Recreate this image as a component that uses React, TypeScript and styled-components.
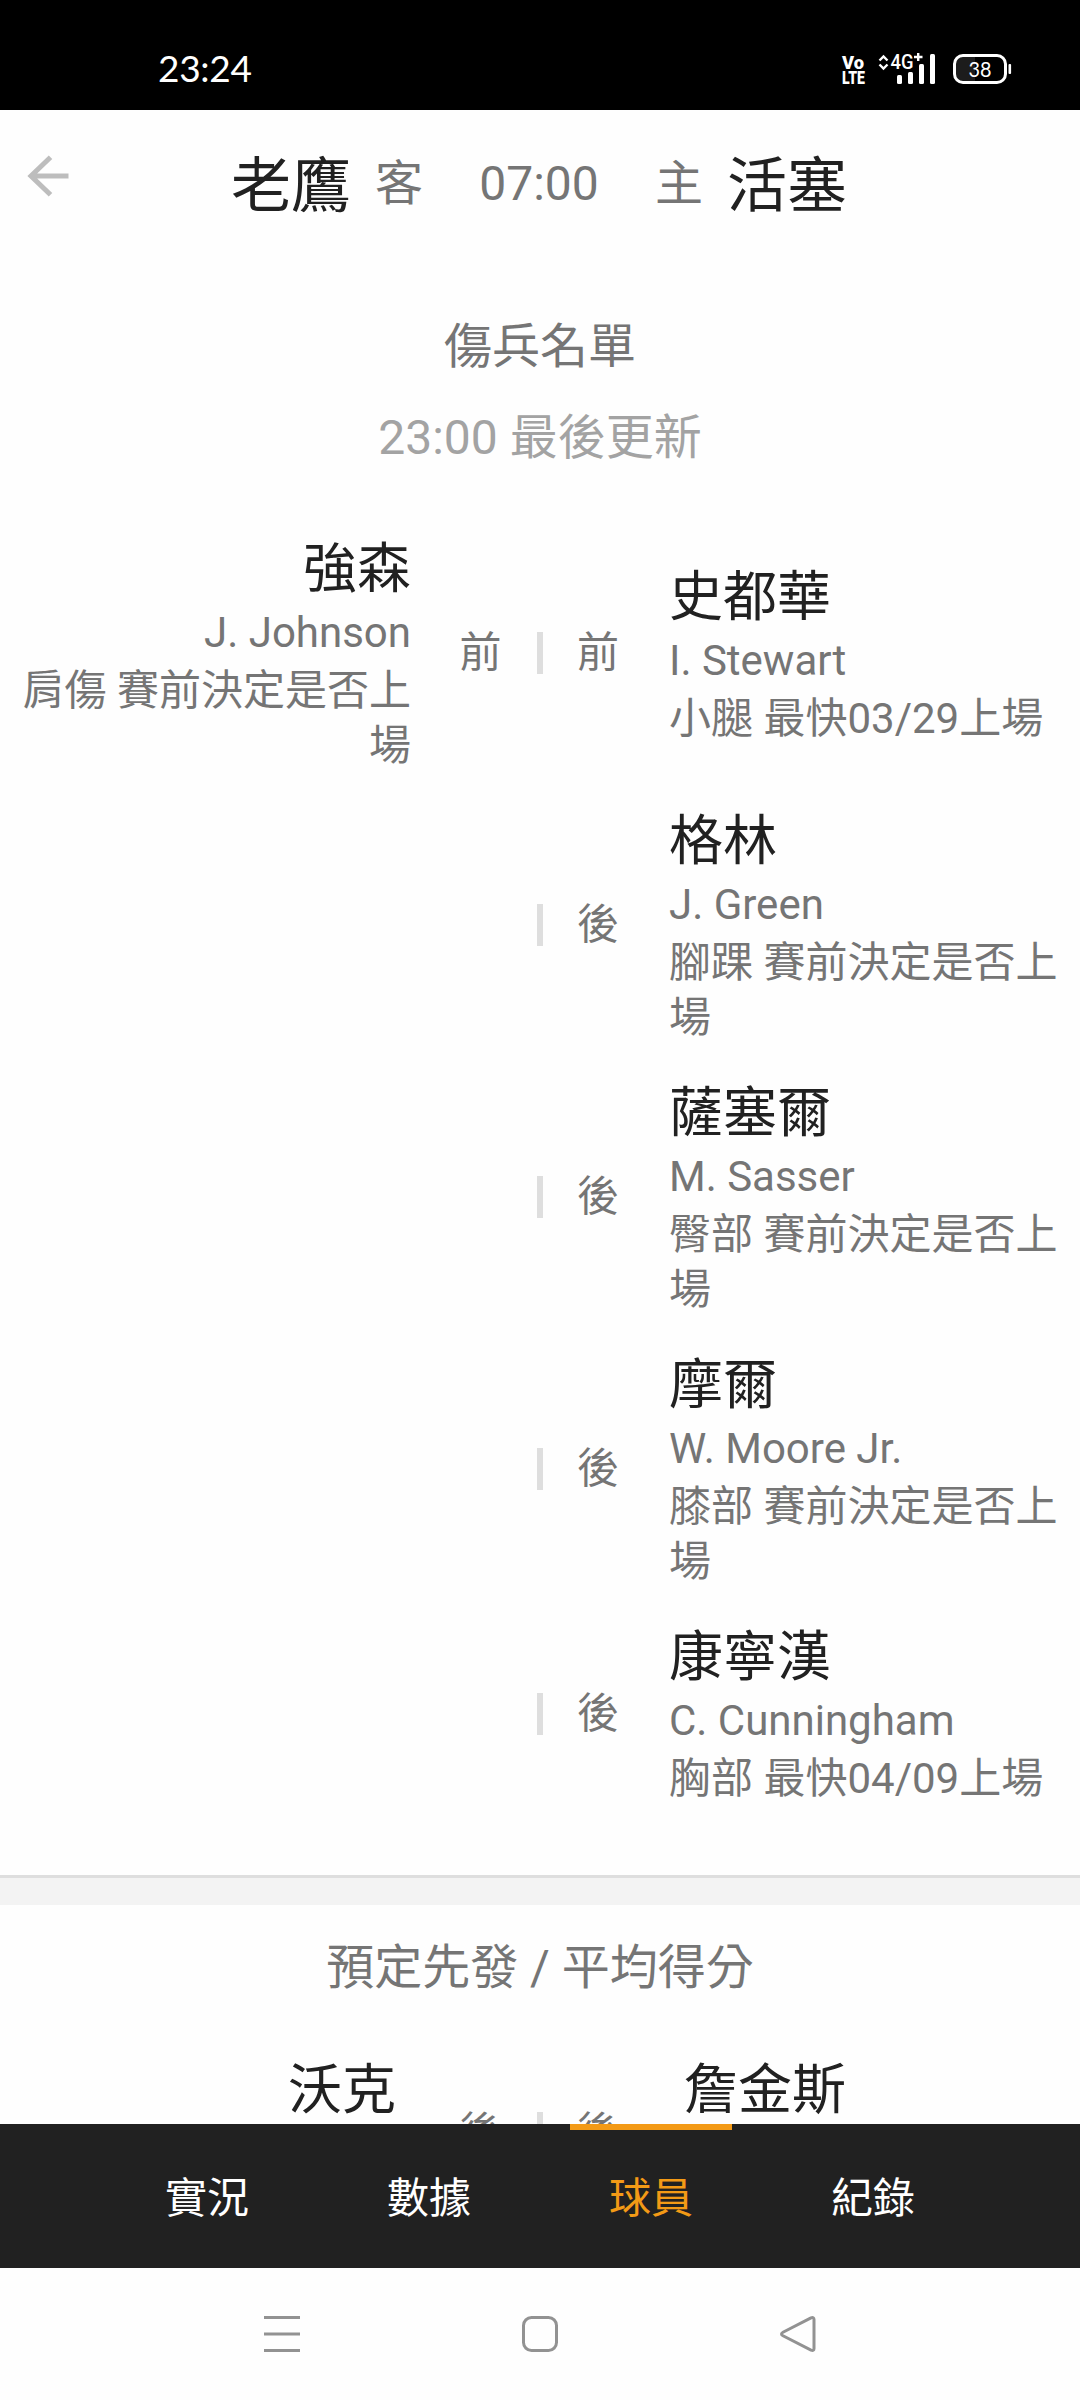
import React from 'react';
import styled, { createGlobalStyle } from 'styled-components';

const GlobalStyle = createGlobalStyle`
  * { box-sizing: border-box; }
  body { margin: 0; background: #fefefe; }
`;

const Screen = styled.div`
  display: flex;
  flex-direction: column;
  width: 1080px;
  height: 2400px;
  overflow: hidden;
  background: #fefefe;
  color: #757575;
  font-family: Roboto, 'Noto Sans CJK TC', sans-serif;
`;

const StatusBar = styled.div`
  display: flex;
  flex: none;
  align-items: center;
  justify-content: space-between;
  height: 110px;
  padding: 28px 65px 0 158px;
  background: #000;
  color: #fff;
`;

const Clock = styled.span`
  padding-bottom: 2px;
  font: 400 37px/40px Lato, sans-serif;
  letter-spacing: -0.3px;
`;

const StatusIcons = styled.svg`
  display: block;
  width: 175px;
  height: 40px;
`;

const Header = styled.header`
  display: grid;
  flex: none;
  grid-template-columns: 79px 1fr 81px;
  align-items: center;
  height: 147px;
`;

const BackButton = styled.button`
  display: flex;
  margin: 0 0 15px 23px;
  padding: 0;
  border: 0;
  background: none;
  color: #bdbdbd;
`;

const Matchup = styled.div`
  display: flex;
  align-items: center;
  justify-content: center;
  gap: 24px;
  font-size: 48px;
  line-height: 60px;
`;

const Team = styled.span`
  padding-top: 6px;
  color: #212121;
  font-size: 60px;
`;

const TipOff = styled.span`
  width: 184px;
  text-align: center;
`;

const Content = styled.main`
  flex: 1;
  min-height: 0;
  overflow: hidden;
`;

const Section = styled.section<{ $top: number; $bottom: number }>`
  padding: ${(p) => p.$top}px 0 ${(p) => p.$bottom}px;
`;

const Heading = styled.h2<{ $muted?: boolean }>`
  margin: 0;
  color: ${(p) => (p.$muted ? '#a3a3a3' : '#757575')};
  font-size: 48px;
  font-weight: 400;
  line-height: ${(p) => (p.$muted ? 92 : 90)}px;
  text-align: center;
`;

const Rows = styled.div<{ $top: number }>`
  padding-top: ${(p) => p.$top}px;
`;

const Row = styled.div<{ $height?: number }>`
  display: grid;
  grid-template-columns: 424px 113px 6px 110px 427px;
  align-items: center;
  height: ${(p) => (p.$height ? `${p.$height}px` : 'auto')};
`;

const Player = styled.div<{ $side: 'away' | 'home'; $inset: number; $top?: boolean }>`
  align-self: ${(p) => (p.$top ? 'start' : 'center')};
  padding: 19px 21px 16px;
  padding-${(p) => (p.$side === 'away' ? 'right' : 'left')}: ${(p) => p.$inset}px;
  text-align: ${(p) => (p.$side === 'away' ? 'right' : 'left')};
`;

const Name = styled.div`
  color: #212121;
  font-size: 54px;
  line-height: 67px;
`;

const Latin = styled.div`
  font-size: 42px;
  line-height: 60px;
`;

const Note = styled.div`
  font-size: 42px;
  line-height: 55px;
`;

const Position = styled.span`
  font-size: 42px;
  line-height: 56px;
  text-align: center;
`;

const Divider = styled.span`
  height: 42px;
  background: #dedede;
`;

const Band = styled.div`
  height: 30px;
  border-top: 3px solid #dedede;
  background: #f3f3f3;
`;

const Tabs = styled.nav`
  display: flex;
  flex: none;
  justify-content: center;
  gap: 60px;
  height: 144px;
  background: #212121;
`;

const Tab = styled.button<{ $active?: boolean }>`
  width: 162px;
  padding: 0;
  border: 0;
  border-top: 6px solid ${(p) => (p.$active ? '#f39a16' : 'transparent')};
  background: none;
  color: ${(p) => (p.$active ? '#f39a16' : '#fff')};
  font: 400 42px/56px Roboto, 'Noto Sans CJK TC', sans-serif;
`;

const SystemBar = styled.div`
  display: flex;
  flex: none;
  align-items: center;
  justify-content: center;
  gap: 218px;
  height: 132px;
`;

const SystemIcon = styled.svg`
  width: 40px;
  height: 40px;
  fill: none;
  stroke: #929292;
  stroke-width: 3;
`;

interface Person {
  pos: string;
  name: string;
  latin: string;
  note: string;
}

const injuries: { away?: Person; home: Person }[] = [
  {
    away: { pos: '前', name: '強森', latin: 'J. Johnson', note: '肩傷 賽前決定是否上場' },
    home: { pos: '前', name: '史都華', latin: 'I. Stewart', note: '小腿 最快03/29上場' },
  },
  { home: { pos: '後', name: '格林', latin: 'J. Green', note: '腳踝 賽前決定是否上場' } },
  { home: { pos: '後', name: '薩塞爾', latin: 'M. Sasser', note: '臀部 賽前決定是否上場' } },
  { home: { pos: '後', name: '摩爾', latin: 'W. Moore Jr.', note: '膝部 賽前決定是否上場' } },
  { home: { pos: '後', name: '康寧漢', latin: 'C. Cunningham', note: '胸部 最快04/09上場' } },
];

const tabs = ['實況', '數據', '球員', '紀錄'];

function PlayerInfo({ side, person }: { side: 'away' | 'home'; person?: Person }) {
  if (!person) return <span />;
  return (
    <Player $side={side} $inset={side === 'away' ? 13 : 16}>
      <Name>{person.name}</Name>
      <Latin>{person.latin}</Latin>
      <Note>{person.note}</Note>
    </Player>
  );
}

function StatusGlyphs() {
  return (
    <StatusIcons viewBox="840 49 175 40" fill="#fff">
      <path d="M962 56h13v26h-13a7 7 0 0 1-7-7v-12a7 7 0 0 1 7-7z" fill="#1c1c1c" />
      <g fontFamily="Roboto, sans-serif">
        <text x="842" y="68.5" fontSize="18.5" fontWeight="900" textLength="22" lengthAdjust="spacingAndGlyphs">Vo</text>
        <text x="842" y="84" fontSize="19" fontWeight="900" textLength="23" lengthAdjust="spacingAndGlyphs">LTE</text>
        <text x="890.5" y="69" fontSize="20" fontWeight="500" textLength="23" lengthAdjust="spacingAndGlyphs">4G</text>
      </g>
      <text x="968.5" y="76.500" fontFamily="Lato, sans-serif" fontSize="21" textLength="23" lengthAdjust="spacingAndGlyphs">38</text>
      <path d="M879.5 60.500l4-4 4 4M879.5 64.500l4 4 4-4M914 57h8.500M918.200 53v8" fill="none" stroke="#fff" strokeWidth="2.400" />
      <rect x="897" y="75" width="5" height="9" rx="1.500" />
      <rect x="908" y="72" width="5" height="12" rx="1.500" />
      <rect x="919" y="64" width="5" height="20" rx="1.500" />
      <rect x="930" y="54" width="5" height="30" rx="1.500" />
      <rect x="954.500" y="55.500" width="51" height="27" rx="8.500" fill="none" stroke="#fff" strokeWidth="3" />
      <rect x="1008.500" y="64" width="2.600" height="10" rx="1" />
    </StatusIcons>
  );
}

export default function App() {
  return (
    <Screen>
      <GlobalStyle />
      <StatusBar>
        <Clock>23:24</Clock>
        <StatusGlyphs />
      </StatusBar>
      <Header>
        <BackButton aria-label="返回">
          <svg width="48" height="48" viewBox="0 0 48 48" fill="none" stroke="currentColor" strokeWidth="5">
            <path d="M45.500 24H8M27.500 5.200L8 24l19.500 18.800" />
          </svg>
        </BackButton>
        <Matchup>
          <Team>老鷹</Team>
          <span>客</span>
          <TipOff>07:00</TipOff>
          <span>主</span>
          <Team>活塞</Team>
        </Matchup>
      </Header>
      <Content>
        <Section $top={45} $bottom={53}>
          <Heading>傷兵名單</Heading>
          <Heading $muted>23:00 最後更新</Heading>
          <Rows $top={33}>
            {injuries.map(({ away, home }) => (
              <Row key={home.latin}>
                <PlayerInfo side="away" person={away} />
                <Position>{away?.pos}</Position>
                <Divider />
                <Position>{home.pos}</Position>
                <PlayerInfo side="home" person={home} />
              </Row>
            ))}
          </Rows>
        </Section>
        <Band />
        <Section $top={18} $bottom={0}>
          <Heading>預定先發 / 平均得分</Heading>
          <Rows $top={25}>
            <Row $height={190}>
              <Player $side="away" $inset={28} $top>
                <Name>沃克</Name>
              </Player>
              <Position>後</Position>
              <Divider />
              <Position>後</Position>
              <Player $side="home" $inset={31} $top>
                <Name>詹金斯</Name>
              </Player>
            </Row>
          </Rows>
        </Section>
      </Content>
      <Tabs>
        {tabs.map((tab) => (
          <Tab key={tab} $active={tab === '球員'}>
            {tab}
          </Tab>
        ))}
      </Tabs>
      <SystemBar>
        <SystemIcon viewBox="0 0 40 40">
          <path d="M2 3.500h36M2 20h36M2 36.500h36" />
        </SystemIcon>
        <SystemIcon viewBox="0 0 40 40">
          <rect x="3.500" y="3.500" width="33" height="33" rx="8" />
        </SystemIcon>
        <SystemIcon viewBox="0 0 40 40">
          <path d="M33 3.800L5 18.200Q2 20 5 21.800L33 36.200Q36 37.200 36 34.500V5.500Q36 2.800 33 3.800Z" />
        </SystemIcon>
      </SystemBar>
    </Screen>
  );
}
